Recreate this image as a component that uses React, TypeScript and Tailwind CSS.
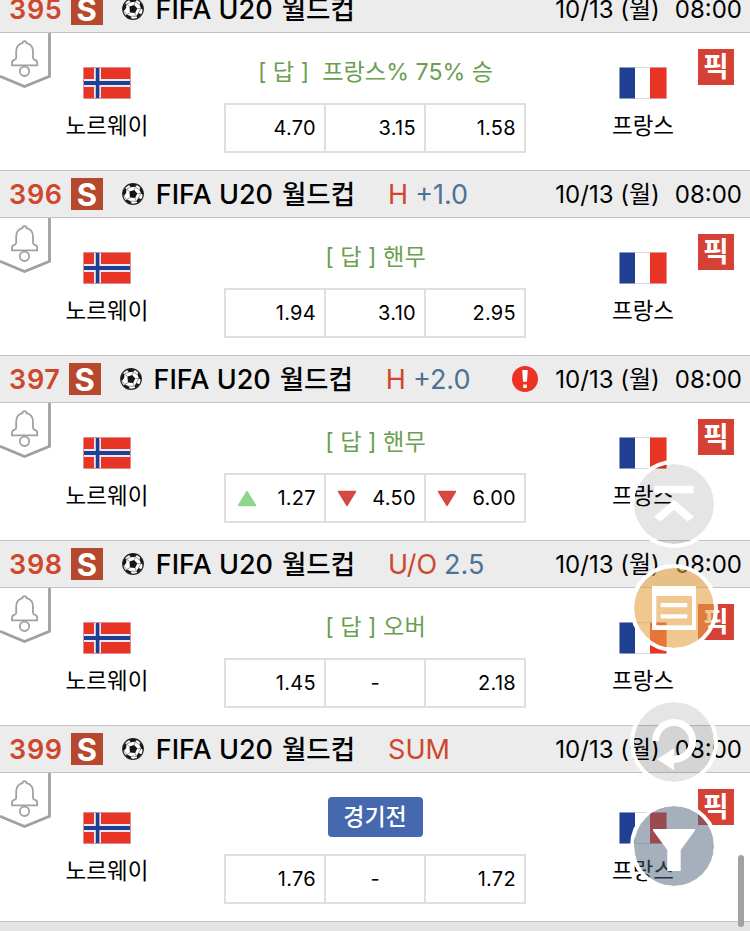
import type { ReactNode } from 'react';

type Odd = { value: string; trend?: 'up' | 'down' };

type Match = {
  no: string;
  kind?: string;
  line?: string;
  alert?: boolean;
  answer?: ReactNode;
  odds: Odd[];
};

const MATCHES: Match[] = [
  {
    no: '395',
    answer: '[ 답 ]\u00a0 프랑스% 75% 승',
    odds: [{ value: '4.70' }, { value: '3.15' }, { value: '1.58' }],
  },
  {
    no: '396',
    kind: 'H',
    line: '+1.0',
    answer: '[ 답 ] 핸무',
    odds: [{ value: '1.94' }, { value: '3.10' }, { value: '2.95' }],
  },
  {
    no: '397',
    kind: 'H',
    line: '+2.0',
    alert: true,
    answer: '[ 답 ] 핸무',
    odds: [
      { value: '1.27', trend: 'up' },
      { value: '4.50', trend: 'down' },
      { value: '6.00', trend: 'down' },
    ],
  },
  {
    no: '398',
    kind: 'U/O',
    line: '2.5',
    answer: '[ 답 ] 오버',
    odds: [{ value: '1.45' }, { value: '-' }, { value: '2.18' }],
  },
  {
    no: '399',
    kind: 'SUM',
    odds: [{ value: '1.76' }, { value: '-' }, { value: '1.72' }],
  },
];

function SoccerBall() {
  return (
    <svg width="22" height="22" viewBox="0 0 22 22" className="shrink-0">
      <circle cx="11" cy="11" r="10.3" fill="#fff" stroke="#2a2a2a" strokeWidth="1.2" />
      <g fill="#161616">
        <path d="M7.4 8.4 12.2 6.9l3.1 3.6-2.2 4.5-5.1-.5z" />
        <path d="M6.6 1.6 11 .6l4.2 1.2-1.8 2-4.6.5z" />
        <path d="M18 4 21 8l.4 4.2-2.3-1.8-1.5-3.4z" />
        <path d="M19.5 16.2 15.6 20.2l-1.2-1.9 1.9-3.2z" />
        <path d="M4.8 16.6 8.8 18.2l.9 3-3.6-1.2-2.5-2.7z" />
        <path d="M.8 9.8 2.6 5.4l1.8.6-.2 4-2.4 2.9-.9-1z" />
      </g>
      <path
        d="M7.4 8.4 4.4 6M12.2 6.9l1.2-3.1M15.3 10.5l3.8-.1M13.1 15l1.3 3.3M8 14.5l-3.2 2.1M8.8 4.3 4.4 6M13.4 3.8l4.2 3.2M14.4 18.3l-5.6-.1M1.8 12.9l3 3.7M19.1 10.4l-2.8 4.7"
        stroke="#555"
        strokeWidth=".6"
        fill="none"
      />
    </svg>
  );
}

function BellTag() {
  return (
    <svg width="51" height="57" viewBox="0 0 51 57" fill="none" stroke="#a0a0a0" className="shrink-0">
      <path d="M49.5 0v43.2L24.5 53.5 0 43.2" strokeWidth="2.8" />
      <path
        d="M24.5 8.2c1.3 0 2 .8 2.1 2 4.3 1 6.4 4.3 6.4 8.6v6c0 1.2.6 1.7 1.8 2 1.7.4 2.4 1.4 2.4 3v2.6H12v-2.6c0-1.6.7-2.6 2.4-3 1.2-.3 1.8-.8 1.8-2v-6c0-4.3 2.1-7.6 6.2-8.6.1-1.2.8-2 2.1-2z"
        strokeWidth="1.8"
      />
      <circle cx="24.5" cy="38.3" r="4.7" strokeWidth="1.8" />
    </svg>
  );
}

function NorwayFlag() {
  return (
    <svg width="48" height="32" viewBox="0 0 48 32">
      <rect width="48" height="32" fill="#d0d0d4" />
      <rect x="0.6" y="0.6" width="46.8" height="30.8" fill="#e83425" />
      <path d="M11 1h7v30h-7zM1 12h46v8H1z" fill="#eceaf0" />
      <path d="M12.8 1h3.6v30h-3.6zM1 14h46v4H1z" fill="#1f3f93" />
    </svg>
  );
}

function FranceFlag() {
  return (
    <svg width="48" height="32" viewBox="0 0 48 32">
      <rect width="48" height="32" fill="#d8d8db" />
      <rect x="0.6" y="0.6" width="15.4" height="30.8" fill="#1f3f93" />
      <rect x="16" y="1" width="15" height="30" fill="#fff" />
      <rect x="31" y="0.6" width="16.4" height="30.8" fill="#e83425" />
    </svg>
  );
}

function Team({ name, children }: { name: string; children: ReactNode }) {
  return (
    <div className="flex flex-col items-center pt-[34px]">
      {children}
      <span className="mt-[13px] h-[28px] whitespace-nowrap text-[22.5px] leading-[28px]">{name}</span>
    </div>
  );
}

function OddCell({ odd }: { odd: Odd }) {
  if (odd.value === '-') {
    return <div className="flex items-center justify-center text-[20px]">-</div>;
  }
  return (
    <div className="flex items-center pl-[11px] pr-[8px]">
      {odd.trend && (
        <svg width="20" height="17" viewBox="0 0 19 16" className={odd.trend === 'down' ? 'rotate-180' : ''}>
          <path
            d="M9.5 1.5 17.5 14.5h-16z"
            strokeWidth="1.5"
            strokeLinejoin="round"
            className={odd.trend === 'up' ? 'fill-[#8bd68b] stroke-[#8bd68b]' : 'fill-[#d64843] stroke-[#d64843]'}
          />
        </svg>
      )}
      <span className="ml-auto text-[20px] leading-none tracking-[0.3px]">{odd.value}</span>
    </div>
  );
}

function MatchHeader({ match }: { match: Match }) {
  return (
    <header className="flex h-[48px] items-center whitespace-nowrap border-y border-[#c2c2c4] bg-[#ececec] pl-[9px] pr-[8px] text-[27px] leading-none">
      <span className="font-semibold tracking-[0.7px] text-[#cf472c]">{match.no}</span>
      <span className="ml-[8px] flex size-8 items-center justify-center bg-[#b6492d] text-[31px] font-bold text-white">S</span>
      <span className="ml-[19px] flex">
        <SoccerBall />
      </span>
      <span className="ml-[12px] font-medium">FIFA U20</span>
      <span className="ml-[9px] pt-px text-[26.5px] font-medium">월드컵</span>
      {match.kind && <span className="ml-[33px] text-[#cf472c]">{match.kind}</span>}
      {match.line && <span className="ml-[7px] text-[#4f7293]">{match.line}</span>}
      <span className="ml-auto flex items-center pt-px text-[24px]">
        {match.alert && (
          <svg width="26" height="26" viewBox="0 0 26 26" className="-mt-px mr-[17px]">
            <circle cx="13" cy="13" r="13" fill="#ea3323" />
            <path d="M10.2 4h5.6l-.8 11.800h-4zM11.2 18.5h3.6v3.5h-3.6z" fill="#fff" />
          </svg>
        )}
        <span>10/13 (월)</span>
        <span className="ml-[15px]">08:00</span>
      </span>
    </header>
  );
}

function MatchRow({ match }: { match: Match }) {
  const pending = !match.answer;
  return (
    <section>
      <MatchHeader match={match} />
      <div className={pending ? 'flex h-[148px]' : 'flex h-[137px]'}>
        <BellTag />
        <div className={pending ? '-mr-px w-[112px] pt-[5px]' : '-mr-px w-[112px]'}>
          <Team name="노르웨이">
            <NorwayFlag />
          </Team>
        </div>
        <div className="flex flex-1 flex-col items-center">
          {pending ? (
            <span className="mt-[24px] flex h-[40px] w-[95px] items-center justify-center rounded-[4px] bg-[#4668ae] pt-px text-[23px] font-medium text-white">
              경기전
            </span>
          ) : (
            <span className="mt-[25px] h-[28px] whitespace-nowrap pl-px text-[23.2px] leading-[29px] text-[#6a9e51]">{match.answer}</span>
          )}
          <div className="mt-[17px] grid h-[50px] w-[302px] grid-cols-[100px_100px_98px] divide-x-2 divide-[#dfdfdf] border-2 border-[#dfdfdf]">
            {match.odds.map((odd, i) => (
              <OddCell key={i} odd={odd} />
            ))}
          </div>
        </div>
        <div className={pending ? 'w-[110px] pt-[5px]' : 'w-[110px]'}>
          <Team name="프랑스">
            <FranceFlag />
          </Team>
        </div>
        <span className="mr-4 mt-4 flex size-9 items-center justify-center bg-[#d54134] text-[28px] font-bold leading-none text-white">픽</span>
      </div>
    </section>
  );
}

function FloatingButtons() {
  return (
    <div className="absolute left-[630px] top-[460px] flex flex-col">
      <button className="size-[88px] rounded-full border-4 border-white bg-black/10 bg-clip-padding">
        <svg width="88" height="88" viewBox="0 0 88 88" className="-m-1 max-w-none" fill="#fff">
          <path d="M24.3 25.7h39.3v7.6H24.3zM44 39.7l20 17-6.3 4.8L44 49.7 30.5 61.5 24 56.7z" />
        </svg>
      </button>
      <button className="mt-4 size-[88px] rounded-full border-4 border-white bg-[#e4a244]/60 bg-clip-padding">
        <svg width="88" height="88" viewBox="0 0 88 88" className="-m-1 max-w-none" fill="#fff">
          <path fillRule="evenodd" d="M22 22h44v44H22zM26.300 32v29.300H62V32z" />
          <path d="M30.7 39h26.6v4.3H30.7zM30.7 50.2h26.6v4.4H30.7z" />
        </svg>
      </button>
      <button className="mt-[46px] size-[88px] rounded-full border-4 border-white bg-black/10 bg-clip-padding">
        <svg width="88" height="88" viewBox="0 0 88 88" className="-m-1 max-w-none" fill="#fff">
          <path d="M25.5 43A18.5 18.5 0 1 1 44 61.5" fill="none" stroke="#fff" strokeWidth="7" />
          <path d="M44 50.3v22L27.3 61.3z" />
        </svg>
      </button>
      <button className="mt-4 size-[88px] rounded-full border-4 border-white bg-[#4d617b]/50 bg-clip-padding">
        <svg width="88" height="88" viewBox="0 0 88 88" className="-m-1 max-w-none" fill="#fff">
          <path d="M23 27h42v1.500L50.7 48v21H37.3V48L23 28.5z" />
        </svg>
      </button>
    </div>
  );
}

export default function App() {
  return (
    <div className="relative h-[931px] w-[750px] overflow-hidden bg-white font-['Inter','Noto_Sans_CJK_KR',sans-serif] text-black">
      <main className="-mt-[15px]">
        {MATCHES.map((match) => (
          <MatchRow key={match.no} match={match} />
        ))}
        <div className="h-[48px] border-y border-[#c2c2c4] bg-[#e4e4e4]" />
      </main>
      <FloatingButtons />
      <div className="absolute left-[738px] top-[855px] h-[72px] w-[6px] rounded-full bg-[#a2a2a2]" />
    </div>
  );
}
